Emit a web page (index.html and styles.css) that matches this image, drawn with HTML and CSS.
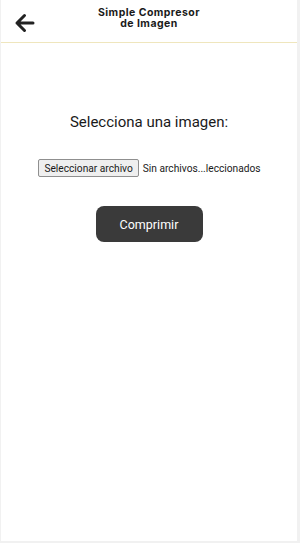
FILE: index.html
```html
<!DOCTYPE html>
<html lang="es">
<head>
    <meta charset="UTF-8">
    <meta name="viewport" content="width=device-width, initial-scale=1.0">
    <title>Simple Compresor de Imagen</title>
    <link rel="stylesheet" href="styles.css">
</head>
<body>
    <div class="app">
        <header class="topbar">
            <button class="back-btn" aria-label="Volver">
                <svg viewBox="0 0 24 24" width="24" height="24">
                    <path d="M21 12H5M12.5 4.5L5 12l7.5 7.5" fill="none" stroke="#222" stroke-width="3" stroke-linecap="round" stroke-linejoin="round"/>
                </svg>
            </button>
            <h1>Simple Compresor<br>de Imagen</h1>
        </header>

        <main class="content">
            <p class="label">Selecciona una imagen:</p>
            <div class="file-row">
                <button class="file-btn">Seleccionar archivo</button>
                <span class="file-name">Sin archivos...leccionados</span>
            </div>
            <button class="btn">Comprimir</button>
        </main>
    </div>
</body>
</html>
```

FILE: styles.css
```css
/* General */
html, body {
    margin: 0;
    padding: 0;
    height: 100%;
    background: #fff;
}

body {
    font-family: Roboto, "Liberation Sans", Arial, sans-serif;
    color: #1a1a1a;
}

.app {
    box-sizing: border-box;
    height: 543px;
    border: 1px solid #f1f1f1;
    border-top: none;
    border-right-width: 3px;
    border-bottom-width: 2px;
    display: flex;
    flex-direction: column;
}

/* Header */
.topbar {
    position: relative;
    height: 42px;
    border-bottom: 1px solid #efe6bd;
    display: flex;
    align-items: center;
    justify-content: center;
}

.back-btn {
    position: absolute;
    left: 11px;
    top: 11px;
    padding: 0;
    border: none;
    background: none;
    line-height: 0;
}

.topbar h1 {
    margin: 0;
    margin-top: -6px;
    font-family: Inter, "DejaVu Sans", sans-serif;
    font-size: 10.5px;
    font-weight: 700;
    letter-spacing: 0.45px;
    line-height: 11.5px;
    text-align: center;
    color: #1a1a1a;
}

/* Content */
.content {
    display: flex;
    flex-direction: column;
    align-items: center;
    padding-top: 70px;
}

.label {
    margin: 0;
    font-size: 15px;
    line-height: 18px;
}

.file-row {
    display: flex;
    align-items: center;
    margin-top: 28px;
    margin-left: 1px;
}

.file-btn {
    font-family: Roboto, "Liberation Sans", Arial, sans-serif;
    font-size: 10.2px;
    color: #1a1a1a;
    height: 18px;
    padding: 0 5px;
    background: #efefef;
    border: 1px solid #8f8f8f;
    border-radius: 2px;
}

.file-name {
    font-size: 10.2px;
    margin-left: 4px;
}

.btn {
    margin-top: 29px;
    width: 107px;
    height: 36px;
    background: #3a3a3a;
    color: #fff;
    border: none;
    border-radius: 8px;
    font-family: Roboto, "Liberation Sans", Arial, sans-serif;
    font-size: 12.5px;
}
```
